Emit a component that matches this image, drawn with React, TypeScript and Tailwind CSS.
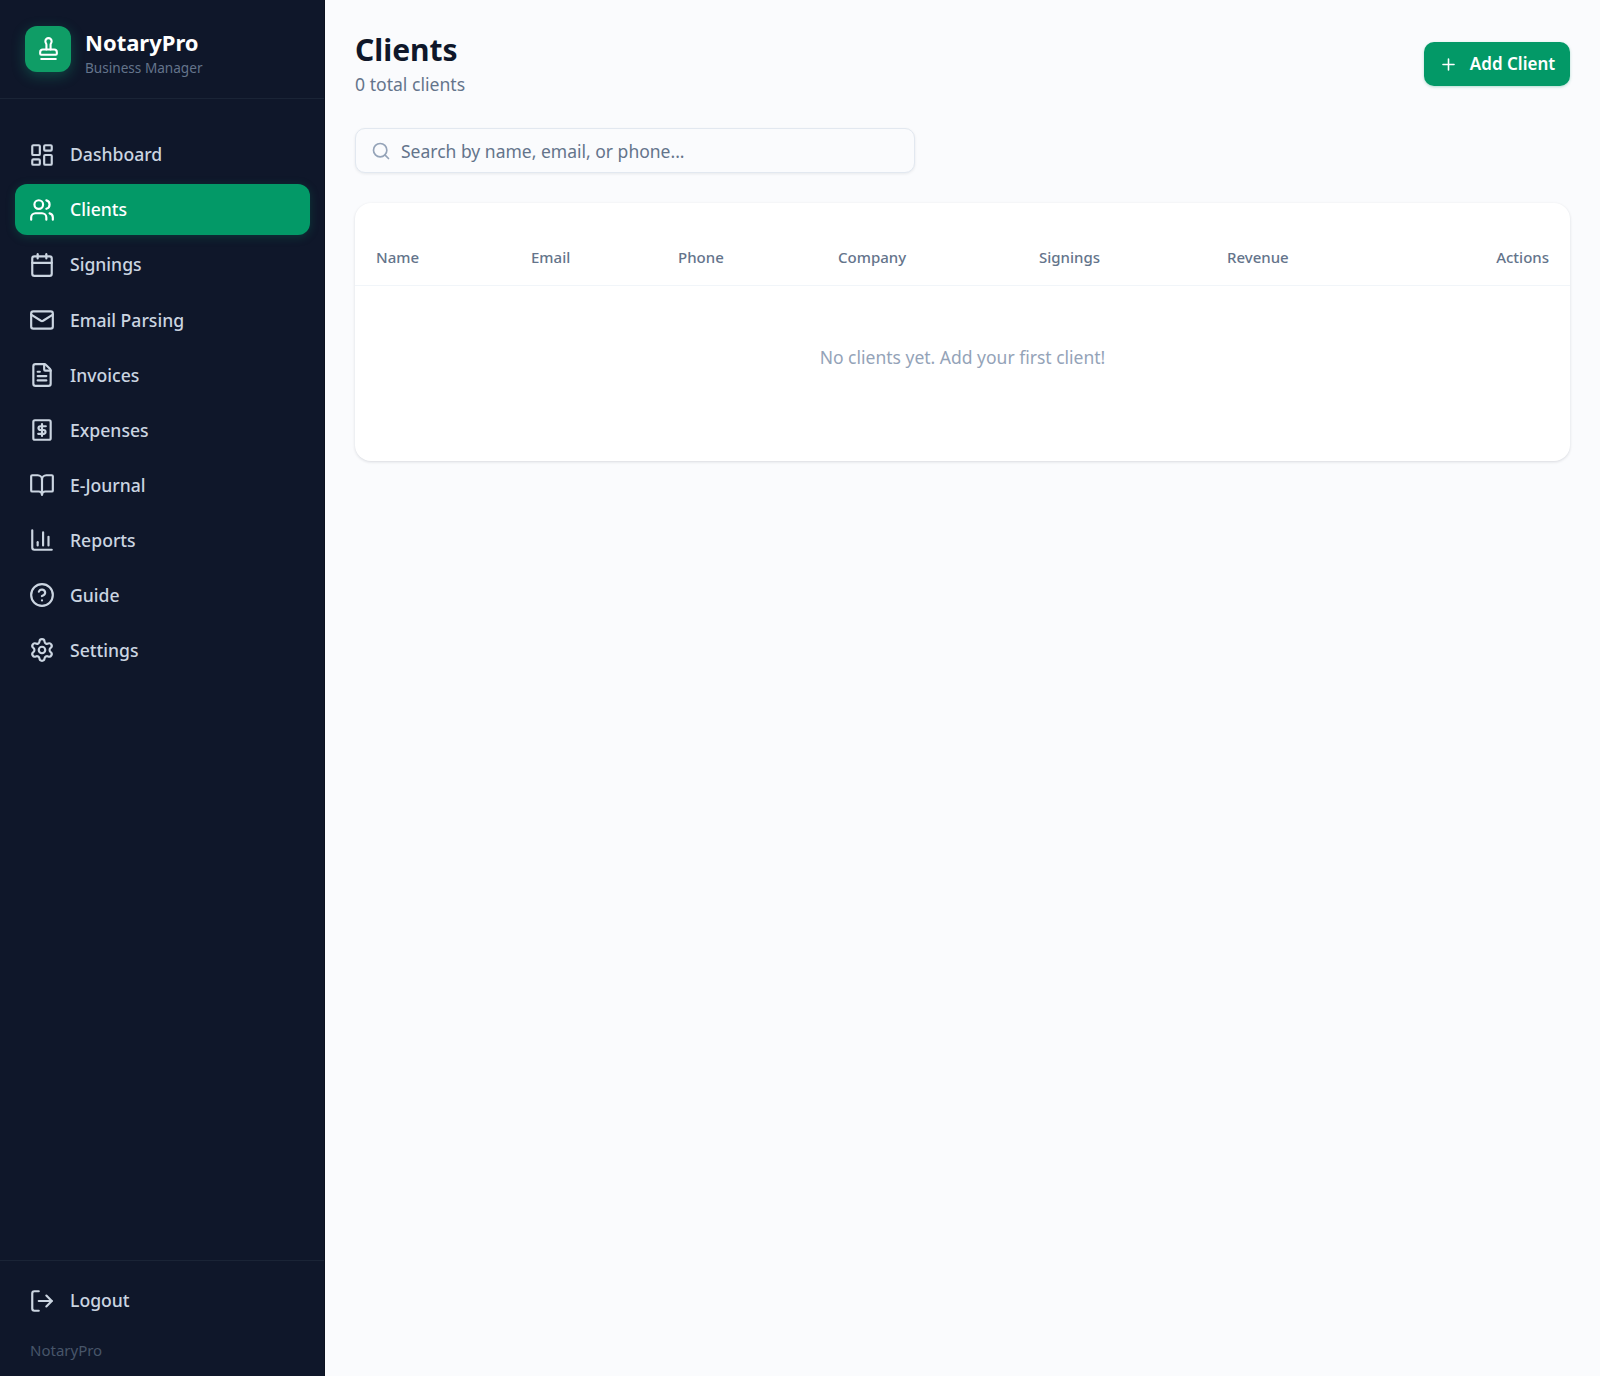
import {
  BookOpen,
  Calendar,
  ChartColumn,
  CircleHelp,
  FileText,
  LayoutDashboard,
  LogOut,
  Mail,
  Plus,
  Search,
  Settings,
  Stamp,
  Users,
} from "lucide-react";
import type { ComponentType, SVGProps } from "react";

// square with a dollar sign, lucide has nothing that looks like this one
function ExpenseIcon(props: SVGProps<SVGSVGElement>) {
  return (
    <svg
      viewBox="0 0 24 24"
      fill="none"
      stroke="currentColor"
      strokeWidth={2}
      strokeLinecap="round"
      strokeLinejoin="round"
      {...props}
    >
      <rect x="4" y="3" width="16" height="18" rx="1.5" />
      <path d="M15.5 8.5h-5a1.75 1.75 0 0 0 0 3.5h3a1.75 1.75 0 0 1 0 3.5h-5" />
      <path d="M12 6.5v11" />
    </svg>
  );
}

type NavItem = {
  label: string;
  icon: ComponentType<{ className?: string; strokeWidth?: number }>;
  active?: boolean;
};

const navItems: NavItem[] = [
  { label: "Dashboard", icon: LayoutDashboard },
  { label: "Clients", icon: Users, active: true },
  { label: "Signings", icon: Calendar },
  { label: "Email Parsing", icon: Mail },
  { label: "Invoices", icon: FileText },
  { label: "Expenses", icon: ExpenseIcon },
  { label: "E-Journal", icon: BookOpen },
  { label: "Reports", icon: ChartColumn },
  { label: "Guide", icon: CircleHelp },
  { label: "Settings", icon: Settings },
];

const columns = [
  { label: "Name", width: "w-[155px]" },
  { label: "Email", width: "w-[147px]" },
  { label: "Phone", width: "w-[160px]" },
  { label: "Company", width: "w-[201px]" },
  { label: "Signings", width: "w-[188px]" },
  { label: "Revenue", width: "w-[200px]" },
];

function Sidebar() {
  return (
    <aside className="flex h-[1376px] w-[325px] shrink-0 flex-col border-r border-[#0b1120] bg-[#0f172a]">
      <div className="flex h-[99px] items-center gap-[14px] border-b border-[#1a2436] pb-[1px] pl-[25px]">
        <div className="flex h-[46px] w-[46px] items-center justify-center rounded-[12px] bg-[#0f9d66] shadow-[0_4px_14px_rgba(16,185,129,0.3)]">
          <Stamp className="h-[25px] w-[25px] text-white" strokeWidth={2} />
        </div>
        <div className="pt-[7px]">
          <div className="text-[22px] leading-[28px] font-bold text-white">NotaryPro</div>
          <div className="mt-[3px] text-[13.6px] leading-[18px] text-[#64748b]">Business Manager</div>
        </div>
      </div>

      <nav className="flex flex-col gap-[4.1px] pt-[30px] pr-[14px] pl-[15px]">
        {navItems.map((item) => (
          <a
            key={item.label}
            className={
              item.active
                ? "flex h-[51px] items-center gap-[15px] rounded-[12px] bg-[#039967] pl-[14px] text-[17.6px] font-medium text-white shadow-[0_2px_10px_rgba(5,150,105,0.25)]"
                : "flex h-[51px] items-center gap-[15px] rounded-[12px] pl-[14px] text-[17.6px] font-medium text-[#cbd5e1]"
            }
          >
            <item.icon className="h-[26px] w-[26px] shrink-0" strokeWidth={2} />
            {item.label}
          </a>
        ))}
      </nav>

      <div className="mt-auto h-[116px] border-t border-[#1a2436] px-[15px]">
        <a className="mt-[14px] flex h-[51px] items-center gap-[15px] pl-[14px] text-[17.6px] font-medium text-[#cbd5e1]">
          <LogOut className="h-[26px] w-[26px]" strokeWidth={2} />
          Logout
        </a>
        <div className="mt-[13px] pl-[15px] text-[15px] text-[#475569]">NotaryPro</div>
      </div>
    </aside>
  );
}

export default function App() {
  return (
    <div className="flex h-[1376px] w-[1600px] bg-[#fafbfd] font-['Noto_Sans',sans-serif]">
      <Sidebar />
      <main className="flex-1 px-[30px] pt-[30px]">
        <div className="flex items-start justify-between">
          <div>
            <h1 className="text-[30px] leading-[40px] font-bold text-[#0f172a]">Clients</h1>
            <p className="mt-[2px] text-[17.6px] leading-[24px] text-[#64748b]">0 total clients</p>
          </div>
          <button className="mt-[12px] flex h-[44px] w-[146px] items-center justify-center gap-[12px] rounded-[10px] bg-[#039967] text-[17px] font-semibold text-white shadow-[0_1px_3px_rgba(5,150,105,0.3)]">
            <Plus className="h-[19px] w-[19px]" strokeWidth={2} />
            Add Client
          </button>
        </div>

        <div className="mt-[32px] flex h-[45px] w-[560px] items-center gap-[10px] rounded-[10px] border border-[#e2e8f0] bg-[#fafbfd] pl-[15px] shadow-[0_1px_3px_rgba(15,23,42,0.08)]">
          <Search className="h-[20px] w-[20px] text-[#94a3b8]" strokeWidth={2} />
          <span className="pt-[2px] text-[17.5px] text-[#64748b]">Search by name, email, or phone...</span>
        </div>

        <div className="mt-[30px] h-[258px] w-[1215px] rounded-[16px] bg-white shadow-[0_1px_3px_rgba(15,23,42,0.14)]">
          <table className="w-full table-fixed border-collapse">
            <thead>
              <tr className="h-[82px] border-b border-[#f1f5f9]">
                {columns.map((col) => (
                  <th
                    key={col.label}
                    className={`${col.width} pt-[27px] pl-[21px] text-left text-[15px] font-medium text-[#64748b]`}
                  >
                    {col.label}
                  </th>
                ))}
                <th className="pt-[27px] pr-[21px] text-right text-[15px] font-medium text-[#64748b]">Actions</th>
              </tr>
            </thead>
            <tbody>
              <tr>
                <td colSpan={7} className="h-[146px] pb-[3px] text-center text-[17.5px] text-[#94a3b8]">
                  No clients yet. Add your first client!
                </td>
              </tr>
            </tbody>
          </table>
        </div>
      </main>
    </div>
  );
}
